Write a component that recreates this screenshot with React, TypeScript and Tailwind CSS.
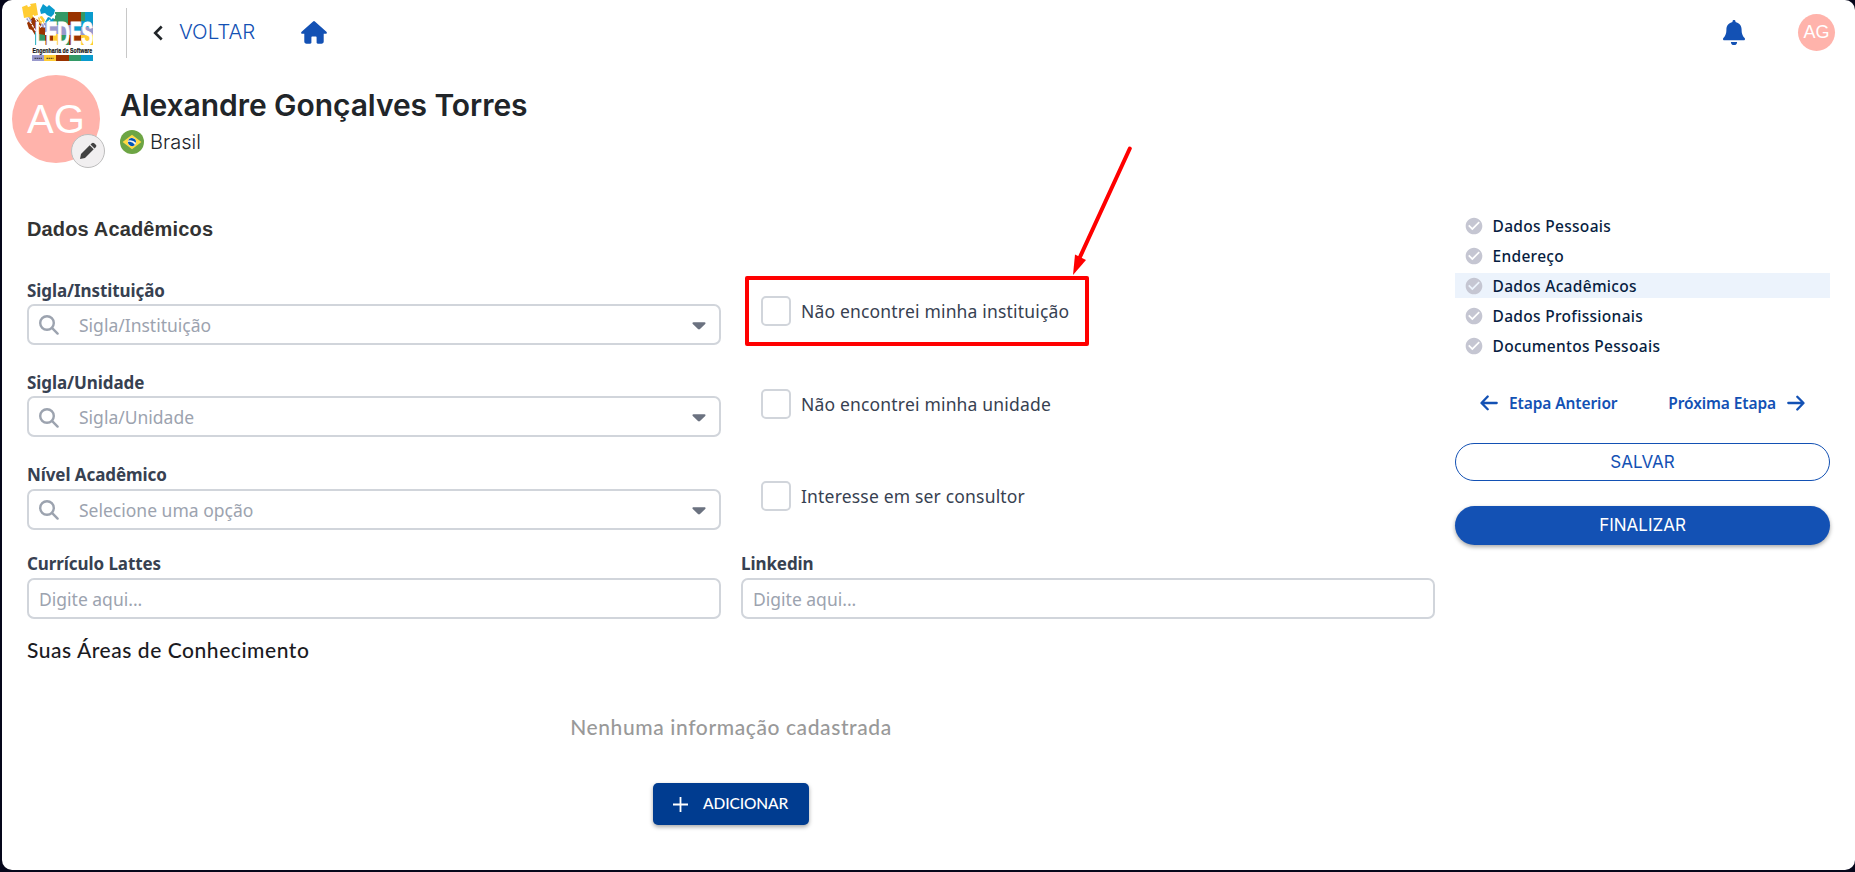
import type { ReactNode } from 'react';
import { MdCheckCircle } from 'react-icons/md';

const STEPS = [
    { label: 'Dados Pessoais', active: false },
    { label: 'Endereço', active: false },
    { label: 'Dados Acadêmicos', active: true },
    { label: 'Dados Profissionais', active: false },
    { label: 'Documentos Pessoais', active: false },
];

const SELECTS = [
    { label: 'Sigla/Instituição', placeholder: 'Sigla/Instituição', check: 'Não encontrei minha instituição' },
    { label: 'Sigla/Unidade', placeholder: 'Sigla/Unidade', check: 'Não encontrei minha unidade' },
    { label: 'Nível Acadêmico', placeholder: 'Selecione uma opção', check: 'Interesse em ser consultor' },
];

function Logo() {
    return (
        <svg className="h-[62px] w-[74px]" viewBox="21 0 74 62">
            <path fill="#ffcc33" d="M22 7l5-2 1 2 3-1-1-2 6-1 2 12-4 1-1 2-3 1-1-2-5 1z" />
            <path fill="#0a9bcd" d="M43 4l4 3 2-2 6 5-1 4-3 3-4-2-2-2-4 1-1-4z" />
            <path fill="#993300" d="M27 23l6-6 5 3 3 4-1 8-5 3-3-5-3-1z" />
            <path fill="#ffcc33" d="M38 17l4-1 3 4-2 5-4-3z" />
            <path fill="#9999cc" d="M26 19l3-2 3 4-2 2zM41 24l6-2 3 8-6 3z" />
            <path fill="#339966" d="M55 12h14v14H53l-4-5 3-3 3 1zM35 32h10v13H35zM61 32h9v13h-9z" />
            <path fill="#993300" d="M68 12h13v13H68zM38 26l7 2v7l-6-1zM69 34h12v11H69z" />
            <path fill="#339966" d="M81 12h6v10h-6z" />
            <path fill="#0a9bcd" d="M85 12h8v17H81v-8h4zM74 23h7v12h-7zM48 17l6 2-2 6-7-3z" />
            <path fill="#9999cc" d="M47 25h27v10H47zM81 27h12v9H81z" />
            <path fill="#993300" d="M45 35h8v10h-8z" />
            <path fill="#ffcc33" d="M53 34h8v11h-8zM81 35h12v10H81z" />
            <path fill="none" stroke="#fff" strokeWidth="1.200" strokeDasharray="3 1" d="M28 18l10 17M33 15l8 13M38 15l7 12M48 22l8-8" />
            <g fontFamily="Liberation Sans" fontWeight="700">
                <text transform="translate(35 44.500) scale(0.53 1)" fontSize="33" fill="#fff" stroke="#fff" strokeWidth="1">LEDES</text>
                <text transform="translate(32.500 53) scale(0.7 1)" fontSize="7.500" fill="#111" stroke="#111" strokeWidth="0.200">Engenharia de Software</text>
            </g>
            <path fill="#9999cc" d="M32 55h12v6H32z" />
            <path fill="#ffcc33" d="M44 55h12v6H44z" />
            <path fill="#993300" d="M56 55h13v6H56z" />
            <path fill="#339966" d="M69 55h12v6H69z" />
            <path fill="#0a9bcd" d="M81 55h12v6H81z" />
            <path stroke="#222" strokeWidth="1.300" strokeDasharray="1.500 0.500" opacity="0.700" d="M34.500 58.300h8M46.500 58.300h7" />
        </svg>
    );
}

function Arrow({ flip = false }: { flip?: boolean }) {
    return (
        <svg
            className={flip ? 'h-[18px] w-[18px] rotate-180' : 'h-[18px] w-[18px]'}
            viewBox="0 0 18 18"
            fill="none"
            stroke="currentColor"
            strokeWidth="2.300"
            strokeLinecap="round"
            strokeLinejoin="round"
        >
            <path d="M16.700 9H1.800M7.700 2.500L1.500 9l6.200 6.300" />
        </svg>
    );
}

function Flag() {
    return (
        <svg className="h-6 w-6" viewBox="0 0 24 24">
            <circle cx="12" cy="12" r="12" fill="#6da544" />
            <path fill="#ffda44" d="M12 4.700L21.400 12 12 19.300 2.600 12z" />
            <circle cx="12" cy="12" r="4.200" fill="#f0f0f0" />
            <path fill="#0052b4" d="M10 11.700c-.8 0-1.500.1-2.100.3a4.200 4.200 0 0 0 7 3.100A7 7 0 0 0 10 11.700zM16 12.800a4.200 4.200 0 0 0-8-2.200 8.400 8.400 0 0 1 8 2.200z" />
        </svg>
    );
}

function Field({ label, children }: { label: string; children: ReactNode }) {
    return (
        <div>
            <div className="h-[26.3px] text-[17px] leading-[25px] font-bold tracking-[-0.08px] text-[#374151]">{label}</div>
            <div className="flex h-[41px] items-center rounded-[7px] border-2 border-[#d1d5db] text-[17.5px] text-[#9ca3af]">
                {children}
            </div>
        </div>
    );
}

function Checkbox({ label }: { label: string }) {
    return (
        <label className="mt-[18.5px] flex h-[30px] items-center gap-[10px] pl-5 text-[17.5px] leading-[28px] tracking-[0.18px] text-[#374151]">
            <span className="h-[30px] w-[30px] rounded-[5px] border-2 border-[#d1d5db]" />
            <span>{label}</span>
        </label>
    );
}

export default function App() {
    return (
        <div className="relative h-[872px] w-full overflow-hidden bg-[#05061a] pb-[2px] pl-[2px] font-['Noto_Sans',sans-serif]">
            <div className="h-[870px] rounded-[10px] bg-white">
                <header className="flex h-[65px] items-start">
                    <div className="ml-[19px]">
                        <Logo />
                    </div>
                    <div className="mt-2 ml-[31px] h-[50px] w-px bg-[#c8c8c8]" />
                    <svg className="mt-[25px] ml-[26px] h-4 w-[10px]" viewBox="0 0 10 16" fill="none" stroke="#212529" strokeWidth="2.600">
                        <path d="M8.700 1.500L2.200 8l6.500 6.500" />
                    </svg>
                    <span className="mt-[18px] ml-[16px] w-[76px] font-['Inter',sans-serif] text-[20.5px] leading-7 font-[350] text-[#1351b4]">VOLTAR</span>
                    <svg className="mt-[21px] ml-[45.5px] h-[23px] w-[26px]" viewBox="0 0 26 23" fill="#1351b4">
                        <path d="M12.100.5a1.400 1.400 0 0 1 1.800 0l11.500 10.200c.9.8.4 2-.6 2h-2.100v7.900c0 1.300-.9 2.200-2.200 2.200h-3.700c-.7 0-1.200-.5-1.200-1.200v-5.200c0-.6-.4-1-1-1h-3.200c-.6 0-1 .4-1 1v5.200c0 .7-.5 1.200-1.200 1.200H5.500c-1.300 0-2.200-.9-2.200-2.200v-7.900H1.200c-1 0-1.500-1.200-.6-2z" />
                    </svg>
                    <svg className="mt-5 ml-auto h-[25px] w-[22px]" viewBox="0 0 22 25" fill="#1351b4">
                        <path d="M11 0c-.9 0-1.500.6-1.500 1.400v.7C6 2.900 3.400 5.600 3.400 9.500c0 4.500-1.100 6.300-3 8.500-.3.300-.4.700-.4 1 0 .7.500 1.300 1.300 1.300h19.400c.8 0 1.300-.6 1.300-1.300 0-.3-.1-.7-.4-1-1.900-2.200-3-4-3-8.500 0-3.900-2.600-6.600-6.100-7.400v-.7C12.500.6 11.900 0 11 0zM7.900 21.900a3.100 3.100 0 0 0 6.200 0z" />
                    </svg>
                    <div className="mt-[14px] mr-5 ml-[53.5px] flex h-[37px] w-[37px] items-center justify-center rounded-full bg-[#ffb3ab] font-['Liberation_Sans',sans-serif] text-[18px] text-white">AG</div>
                </header>

                <section className="flex h-[150px] pt-[10px] pl-[10px]">
                    <div className="relative flex h-[88px] w-[88px] items-center justify-center rounded-full bg-[#ffb3ab] font-['Liberation_Sans',sans-serif] text-[40px] text-white">
                        AG
                        <div className="absolute top-[58.5px] left-[58.5px] flex h-[34px] w-[34px] items-center justify-center rounded-full border border-[#bdbdbd] bg-[#f1eff0]">
                            <svg className="h-[18px] w-[18px]" viewBox="0 0 18 18" fill="#424242">
                                <path d="M1 17l1-5L10.700 3.300l4 4L6 16zM11.500 2.500l1.300-1.300c.8-.8 1.700-.7 2.400 0l1.600 1.600c.7.7.8 1.600 0 2.400l-1.300 1.300z" />
                            </svg>
                        </div>
                    </div>
                    <div className="pl-5 font-['Inter',sans-serif] text-[#212529]">
                        <h1 className="mt-[9px] text-[30px] leading-[42px] font-semibold tracking-[-0.06px]">Alexandre Gonçalves Torres</h1>
                        <div className="mt-1 flex h-6 items-center gap-[6px] text-[20px] leading-6 font-light">
                            <Flag />
                            Brasil
                        </div>
                    </div>
                </section>

                <main className="flex pr-[25px] pl-[25px]">
                    <div className="w-[1408px]">
                        <h2 className="h-[62.7px] font-['Liberation_Sans',sans-serif] text-[20px] leading-7 font-bold tracking-[0.15px] text-[#333]">Dados Acadêmicos</h2>
                        <div className="flex flex-col gap-[25.1px]">
                            {SELECTS.map((s) => (
                                <div key={s.label} className="grid grid-cols-2 gap-5">
                                    <Field label={s.label}>
                                        <svg className="mt-[2px] ml-[10px] h-5 w-5" viewBox="0 0 20 20" fill="none" stroke="#9ca3af" strokeWidth="2.400" strokeLinecap="round">
                                            <circle cx="8" cy="8" r="6.800" />
                                            <path d="M13.200 13.200l5.400 5.400" />
                                        </svg>
                                        <span className="ml-5 flex-1 pt-px">{s.placeholder}</span>
                                        <svg className="mt-[3px] mr-[13px] h-2 w-[14px]" viewBox="0 0 14 8" fill="#6b7280">
                                            <path d="M1.500.3h11c1 0 1.400 1 .7 1.700L8 7.100c-.6.600-1.400.600-2 0L.8 2C.1 1.300.5.3 1.500.3z" />
                                        </svg>
                                    </Field>
                                    <Checkbox label={s.check} />
                                </div>
                            ))}
                        </div>
                        <div className="mt-[21.7px] grid grid-cols-2 gap-5">
                            <Field label="Currículo Lattes">
                                <span className="ml-[10px] pt-[2px]">Digite aqui...</span>
                            </Field>
                            <Field label="Linkedin">
                                <span className="ml-[10px] pt-[2px]">Digite aqui...</span>
                            </Field>
                        </div>
                        <h3 className="mt-[17px] font-['Lato',sans-serif] text-[21px] leading-7 font-medium tracking-[0.55px] text-[#1b1b1f]">Suas Áreas de Conhecimento</h3>
                        <p className="mt-[49px] text-center font-['Lato',sans-serif] text-[21px] leading-7 font-medium tracking-[0.6px] text-[#999]">Nenhuma informação cadastrada</p>
                        <button className="mx-auto mt-[42px] flex h-[42px] w-[156px] items-center rounded-[5px] bg-[#003c90] pl-5 font-['Lato',sans-serif] text-[15.5px] font-medium text-white shadow-[0_2px_4px_rgba(0,0,0,0.35)]">
                            <svg className="mt-px h-[15px] w-[15px]" viewBox="0 0 15 15" stroke="#fff" strokeWidth="1.800">
                                <path d="M7.500 0v15M0 7.500h15" />
                            </svg>
                            <span className="ml-[15px] tracking-[-0.1px]">ADICIONAR</span>
                        </button>
                    </div>

                    <aside className="-mt-[2px] ml-5 w-[375px]">
                        <ul className="flex flex-col gap-[5px]">
                            {STEPS.map((step) => (
                                <li
                                    key={step.label}
                                    className={`flex h-[25px] items-center gap-[8.5px] pl-[9px] text-[15.5px] leading-[23px] font-medium tracking-[0.31px] text-[#071d41] ${step.active ? 'bg-[#ecf3fc]' : ''}`}
                                >
                                    <MdCheckCircle className="h-5 w-5 text-[#c5c6d2]" />
                                    <span className="pt-[2px]">{step.label}</span>
                                </li>
                            ))}
                        </ul>
                        <div className="mt-[33px] flex h-6 items-center justify-between pr-[25px] pl-[25px] text-[15.5px] leading-6 font-semibold tracking-[-0.1px] text-[#1351b4]">
                            <span className="flex items-center gap-[11px]">
                                <Arrow />
                                Etapa Anterior
                            </span>
                            <span className="flex items-center gap-[11px]">
                                Próxima Etapa
                                <Arrow flip />
                            </span>
                        </div>
                        <button className="mt-[28px] block h-[38px] w-full rounded-full border border-[#1351b4] font-['Inter',sans-serif] text-[17px] leading-[36px] text-[#1351b4]">SALVAR</button>
                        <button className="mt-[25px] block h-[39px] w-full rounded-full bg-[#1351b4] font-['Inter',sans-serif] text-[17px] leading-[39px] text-white shadow-[0_2px_4px_rgba(0,0,0,0.35)]">FINALIZAR</button>
                    </aside>
                </main>
            </div>

            {/* highlight over the first checkbox */}
            <div className="absolute top-[276px] left-[745px] h-[70px] w-[344px] rounded-[2px] border-4 border-[#ff0000]" />
            <svg className="absolute top-[140px] left-[1060px] h-[140px] w-[80px]" viewBox="0 0 80 140" fill="#ff0000">
                <path stroke="#ff0000" strokeWidth="4" strokeLinecap="round" d="M69.800 8.500L20 117" />
                <path d="M13 135l2-20.500 11 5.500z" />
            </svg>
        </div>
    );
}
